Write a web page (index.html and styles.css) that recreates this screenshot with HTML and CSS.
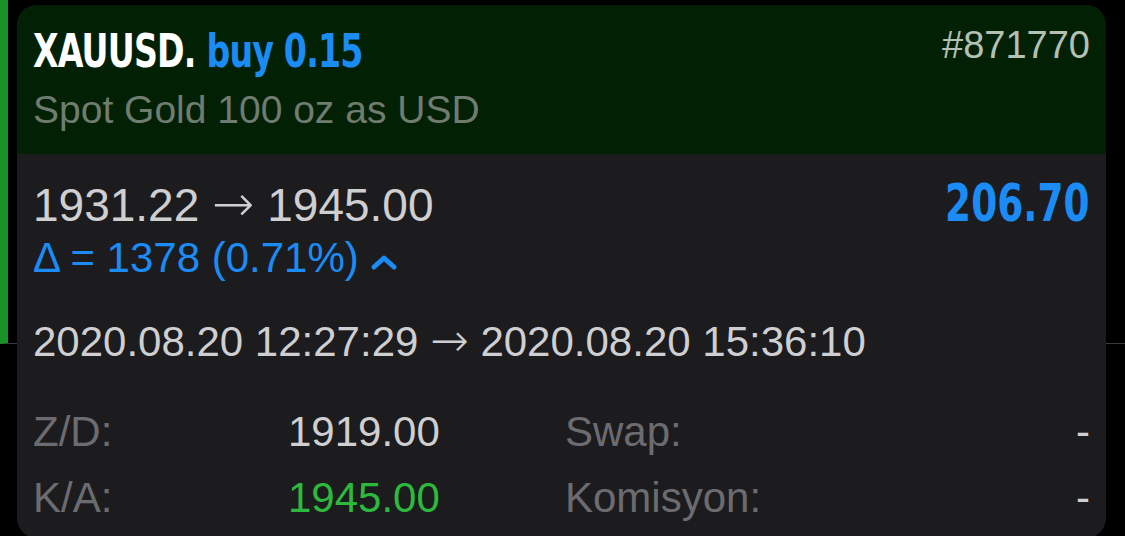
FILE: index.html
```html
<!DOCTYPE html>
<html lang="en">
<head>
    <meta charset="UTF-8">
    <meta name="viewport" content="width=device-width, initial-scale=1.0">
    <title>XAUUSD position</title>
    <link rel="stylesheet" href="styles.css">
</head>
<body>
    <!-- list row behind the popup -->
    <div class="list-row"></div>

    <div class="deal-card">
        <div class="deal-header">
            <div class="deal-title">
                <div class="symbol">XAUUSD. <span class="side">buy 0.15</span></div>
                <div class="description">Spot Gold 100 oz as USD</div>
            </div>
            <div class="ticket">#871770</div>
        </div>

        <div class="deal-body">
            <div class="price-row">
                <div>
                    <div class="prices">1931.22 <span class="arrow">&rarr;</span> 1945.00</div>
                    <div class="delta">&Delta; = 1378 (0.71%)
                        <svg class="chevron" width="28" height="18" viewBox="0 0 28 18">
                            <polyline points="4,14 14,5 24,14" fill="none" stroke="#1b8cf5" stroke-width="5" stroke-linecap="round" stroke-linejoin="round"/>
                        </svg>
                    </div>
                </div>
                <div class="profit">206.70</div>
            </div>

            <div class="times">2020.08.20 12:27:29 <span class="arrow">&rarr;</span> 2020.08.20 15:36:10</div>

            <div class="details">
                <div class="label">Z/D:</div>
                <div class="value">1919.00</div>
                <div class="label">Swap:</div>
                <div class="value dash">-</div>

                <div class="label">K/A:</div>
                <div class="value green">1945.00</div>
                <div class="label">Komisyon:</div>
                <div class="value dash">-</div>
            </div>
        </div>
    </div>
</body>
</html>
```

FILE: styles.css
```css
body {
    margin: 0;
    background: #000;
    font-family: "Liberation Sans", Arial, sans-serif;
    overflow: hidden;
    height: 536px;
}

.list-row {
    height: 343px;
    border-left: 8px solid #1a9129;
    border-bottom: 1px solid #3a3a3c;
}

.deal-card {
    position: absolute;
    top: 5px;
    left: 17px;
    width: 1089px;
    height: 533px;
    border-radius: 20px;
    overflow: hidden;
    background: #1c1c1e;
}

.deal-header {
    display: flex;
    justify-content: space-between;
    align-items: flex-start;
    background: #022004;
    padding: 18px 16px 21px 16px;
}

/* condensed bold look: no narrow font installed, so squeeze DejaVu */
.symbol {
    font-family: "DejaVu Sans Condensed", "DejaVu Sans", sans-serif;
    font-weight: bold;
    font-size: 47px;
    line-height: 56px;
    color: #fff;
    letter-spacing: -1px;
    white-space: nowrap;
    transform: scaleX(0.785);
    transform-origin: left center;
}

.side {
    color: #1b8cf5;
}

.description {
    margin-top: 8px;
    font-size: 39px;
    line-height: 46px;
    color: #6f7c6f;
}

.ticket {
    margin-top: -1px;
    font-size: 38px;
    line-height: 46px;
    color: #b4c0b4;
}

.deal-body {
    padding: 24px 16px 0 16px;
}

.price-row {
    display: flex;
    justify-content: space-between;
    align-items: flex-start;
}

.prices {
    font-size: 46px;
    line-height: 54px;
    color: #cfcfd1;
}

.arrow {
    font-family: "DejaVu Sans", sans-serif;
    font-weight: 300;
    font-size: 1.1em;
    line-height: 0;
}

.delta {
    font-size: 42px;
    line-height: 51px;
    color: #1b8cf5;
}

.chevron {
    vertical-align: 1px;
}

.profit {
    margin-top: -5px;
    font-family: "DejaVu Sans Condensed", "DejaVu Sans", sans-serif;
    font-weight: bold;
    font-size: 52px;
    line-height: 60px;
    color: #1b8cf5;
    transform: scaleX(0.8);
    transform-origin: right center;
}

.times {
    margin-top: 33px;
    font-size: 42px;
    line-height: 52px;
    color: #cfcfd1;
}

.details {
    display: grid;
    grid-template-columns: 255px 277px 1fr auto;
    row-gap: 14px;
    margin-top: 38px;
    font-size: 42px;
    line-height: 52px;
}

.label {
    color: #6c6c70;
}

.value {
    color: #cfcfd1;
}

.value.green {
    color: #2cba3d;
}

.value.dash {
    text-align: right;
}
```
